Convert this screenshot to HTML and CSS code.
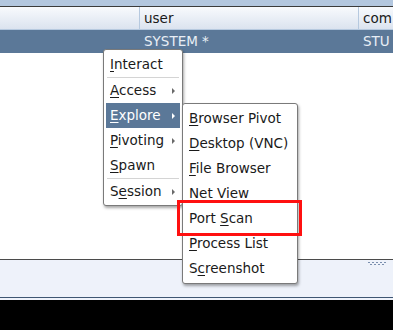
FILE: index.html
```html
<!DOCTYPE html>
<html lang="en">
<head>
  <meta charset="UTF-8" />
  <title>Sessions</title>
  <link rel="stylesheet" href="styles.css">
</head>
<body>
  <div class="window">
    <div class="top-strip"></div>

    <div class="table">
      <div class="thead">
        <div class="cell first"></div>
        <div class="cell user">user</div>
        <div class="cell last">com</div>
      </div>
      <div class="row selected">
        <div class="cell first"></div>
        <div class="cell user">SYSTEM *</div>
        <div class="cell last">STU</div>
      </div>
      <div class="table-body"></div>
    </div>

    <div class="panel">
      <svg class="grip" width="20" height="5" viewBox="0 0 20 5">
        <g fill="#7a8fae">
          <rect x="1" y="0" width="2" height="1" />
          <rect x="5" y="0" width="2" height="1" />
          <rect x="9" y="0" width="2" height="1" />
          <rect x="13" y="0" width="2" height="1" />
          <rect x="17" y="0" width="2" height="1" />
          <rect x="3" y="2" width="2" height="1" />
          <rect x="7" y="2" width="2" height="1" />
          <rect x="11" y="2" width="2" height="1" />
          <rect x="15" y="2" width="2" height="1" />
        </g>
      </svg>
    </div>
    <div class="console"></div>

    <!-- context menu -->
    <div class="menu main-menu">
      <div class="item"><span><u>I</u>nteract</span></div>
      <div class="sep"></div>
      <div class="item"><span><u>A</u>ccess</span><i class="arrow"></i></div>
      <div class="item active"><span><u>E</u>xplore</span><i class="arrow"></i></div>
      <div class="item"><span><u>P</u>ivoting</span><i class="arrow"></i></div>
      <div class="item"><span><u>S</u>pawn</span></div>
      <div class="sep"></div>
      <div class="item"><span>S<u>e</u>ssion</span><i class="arrow"></i></div>
    </div>

    <div class="menu sub-menu">
      <div class="item"><span><u>B</u>rowser Pivot</span></div>
      <div class="item"><span><u>D</u>esktop (VNC)</span></div>
      <div class="item"><span><u>F</u>ile Browser</span></div>
      <div class="item"><span><u>N</u>et View</span></div>
      <div class="item"><span>Port <u>S</u>can</span></div>
      <div class="item"><span><u>P</u>rocess List</span></div>
      <div class="item"><span>S<u>c</u>reenshot</span></div>
    </div>

    <div class="highlight-box"></div>
  </div>
</body>
</html>
```

FILE: styles.css
```css
body {
  margin: 0;
  background: #000;
  font-family: "DejaVu Sans", Verdana, sans-serif;
  font-size: 13.5px;
  color: #1a1a1a;
}

.window {
  position: relative;
  width: 393px;
  height: 330px;
  overflow: hidden;
  display: flex;
  flex-direction: column;
  background: #000;
}

.top-strip {
  height: 6px;
  background: #b3c7df;
}

.table {
  display: flex;
  flex-direction: column;
  border-top: 1px solid #3b3b3b;
  background: #fff;
  height: 252px;
}

.thead,
.row {
  display: flex;
}

.thead {
  height: 22px;
  background: linear-gradient(#f8fafd, #dbe3ef);
  border-bottom: 1px solid #b6c9df;
}

.thead .cell {
  border-right: 1px solid #b6c9df;
}

.cell {
  box-sizing: border-box;
  padding-left: 4px;
  line-height: 22px;
  white-space: nowrap;
  overflow: hidden;
}

.cell.first {
  width: 140px;
}

.cell.user {
  width: 219px;
}

.cell.last {
  flex: 1;
  border-right: none !important;
}

.row {
  height: 23px;
}

.row .cell {
  line-height: 23px;
}

.row.selected {
  background: #5b7898;
  color: #e8eef5;
}

.table-body {
  flex: 1;
  background: #fff;
}

.panel {
  height: 39px;
  box-sizing: border-box;
  border-top: 1px solid #4b4b4b;
  border-bottom: 1px solid #3e5672;
  background: #eef2fa;
  display: flex;
  justify-content: flex-end;
  align-items: flex-start;
  padding: 2px 6px 0 0;
}

.console {
  flex: 1;
  border-top: 2px solid #eef2fa;
  background: #000;
}

/* popup menus */
.menu {
  position: absolute;
  box-sizing: border-box;
  background: #fff;
  border: 1px solid #7a7a7a;
  border-radius: 3px;
  padding: 2px 2px 1px;
  box-shadow: 1px 2px 3px rgba(0, 0, 0, 0.35);
}

.main-menu {
  left: 103px;
  top: 49px;
  width: 80px;
}

.sub-menu {
  left: 182px;
  top: 103px;
  width: 116px;
  padding-bottom: 2px;
}

.item {
  height: 25px;
  line-height: 25px;
  padding-left: 4px;
  padding-right: 5px;
  display: flex;
  justify-content: space-between;
  align-items: center;
  white-space: nowrap;
}

.item u {
  text-decoration: underline;
  text-underline-offset: 2px;
}

.item.active {
  background: #5b7898;
  color: #fff;
}

.sep {
  height: 1px;
  background: #d4d4d4;
  margin: 0 1px;
}

.arrow {
  width: 0;
  height: 0;
  border-left: 3px solid #6a6a6a;
  border-top: 3px solid transparent;
  border-bottom: 3px solid transparent;
}

.item.active .arrow {
  border-left-color: #fff;
}

.highlight-box {
  position: absolute;
  left: 177px;
  top: 200px;
  width: 125px;
  height: 36px;
  box-sizing: border-box;
  border: 3px solid #ff1010;
}
```
